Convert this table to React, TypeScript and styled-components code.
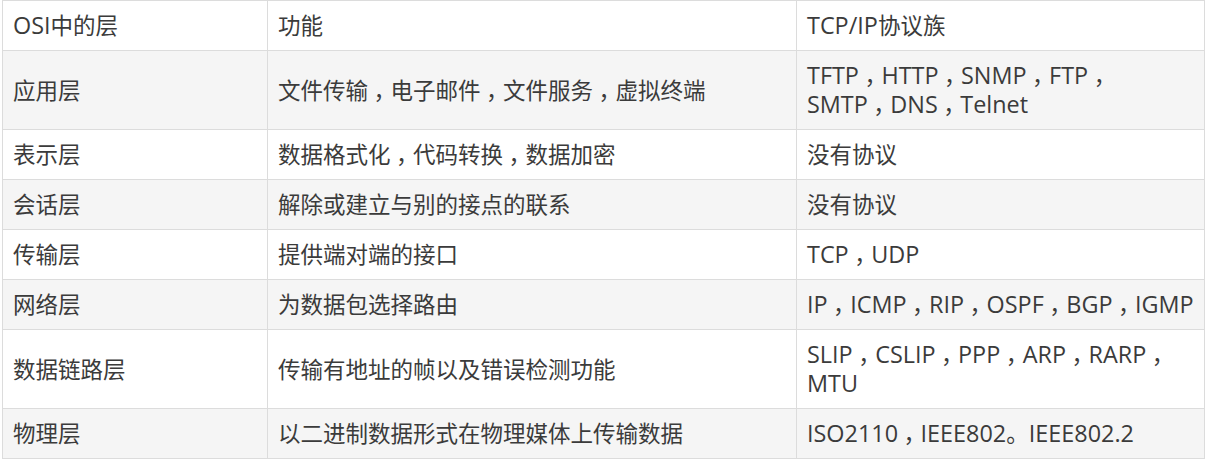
import React from "react";
import styled, { createGlobalStyle } from "styled-components";

const Global = createGlobalStyle`
  html, body { margin: 0; padding: 0; background: #fff; }
  body { font-family: "Open Sans", "Noto Sans CJK SC", sans-serif; }
`;

const Wrap = styled.div`
  padding: 0 0 0 2px;
`;

const Table = styled.table`
  border-collapse: collapse;
  width: 1202px;
  table-layout: fixed;
  font-family: "Open Sans", "Noto Sans CJK SC", sans-serif;
  font-size: 22.5px;
  line-height: 29px;
  color: #3b3b3b;
`;

const Row = styled.tr<{ $shade: boolean }>`
  background: ${(p) => (p.$shade ? "#f5f5f5" : "#ffffff")};
`;

const Cell = styled.td`
  border: 1px solid #dcdcdc;
  padding: 10px;
  text-align: left;
  vertical-align: middle;
  font-weight: 400;
`;

const Latin = styled.span`
  font-family: "Open Sans", sans-serif;
  font-size: 23.4px;
  line-height: 1;
`;

const Comma = styled.span`
  line-height: 1;
  font-feature-settings: "halt" 1;
  padding-left: 5.5px;
  padding-right: 5.75px;
`;

function Text({ value }: { value: string }) {
  const lines = value.split("\n");
  return (
    <>
      {lines.map((line, li) => {
        const parts = line.match(/[\x20-\x7e]+|，|[^\x20-\x7e，]+/g) || [];
        return (
          <React.Fragment key={li}>
            {li > 0 && <br />}
            {parts.map((p, i) =>
              p === "，" ? (
                <Comma key={i}>{p}</Comma>
              ) : /^[\x20-\x7e]+$/.test(p) ? (
                <Latin key={i}>{p}</Latin>
              ) : (
                <React.Fragment key={i}>{p}</React.Fragment>
              )
            )}
          </React.Fragment>
        );
      })}
    </>
  );
}

const rows: [string, string, string][] = [
  ["OSI中的层", "功能", "TCP/IP协议族"],
  ["应用层", "文件传输，电子邮件，文件服务，虚拟终端", "TFTP，HTTP，SNMP，FTP，\nSMTP，DNS，Telnet"],
  ["表示层", "数据格式化，代码转换，数据加密", "没有协议"],
  ["会话层", "解除或建立与别的接点的联系", "没有协议"],
  ["传输层", "提供端对端的接口", "TCP，UDP"],
  ["网络层", "为数据包选择路由", "IP，ICMP，RIP，OSPF，BGP，IGMP"],
  ["数据链路层", "传输有地址的帧以及错误检测功能", "SLIP，CSLIP，PPP，ARP，RARP，MTU"],
  ["物理层", "以二进制数据形式在物理媒体上传输数据", "ISO2110，IEEE802。IEEE802.2"],
];

export default function App() {
  return (
    <Wrap>
      <Global />
      <Table>
        <colgroup>
          <col style={{ width: 265 }} />
          <col style={{ width: 529 }} />
          <col style={{ width: 408 }} />
        </colgroup>
        <tbody>
          {rows.map((r, i) => (
            <Row key={i} $shade={i % 2 === 1}>
              <Cell><Text value={r[0]} /></Cell>
              <Cell><Text value={r[1]} /></Cell>
              <Cell><Text value={r[2]} /></Cell>
            </Row>
          ))}
        </tbody>
      </Table>
    </Wrap>
  );
}
